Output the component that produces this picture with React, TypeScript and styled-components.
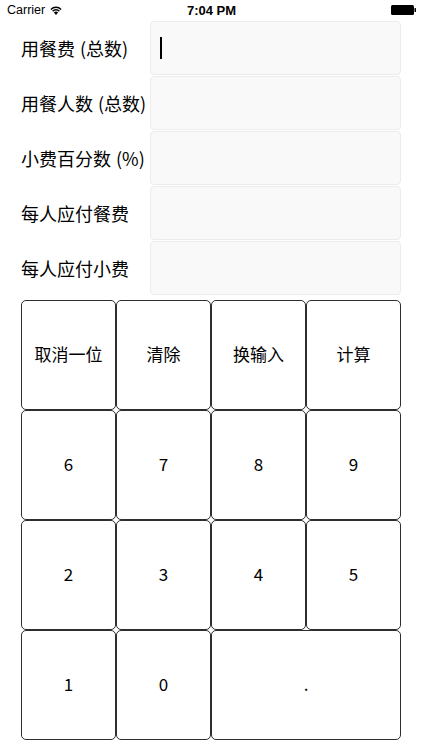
import React from 'react';
import styled, { createGlobalStyle } from 'styled-components';

const Global = createGlobalStyle`
    html, body {
        margin: 0;
        padding: 0;
        background: #ffffff;
    }
    body {
        font-family: "Noto Sans CJK SC", "Noto Sans", sans-serif;
        color: #000;
    }
`;

const Styles = {
    Screen: styled.div`
        width: 422px;
        height: 750px;
        display: flex;
        flex-direction: column;
        background: #fff;
    `,

    StatusBar: styled.div`
        height: 20px;
        display: grid;
        grid-template-columns: 1fr auto 1fr;
        align-items: center;
        padding: 0 6px 0 7px;
        font-family: "Liberation Sans", "Noto Sans", sans-serif;
        font-size: 12.5px;
    `,

    Carrier: styled.div`
        display: flex;
        align-items: center;
        gap: 5px;
    `,

    Time: styled.div`
        font-weight: bold;
        font-size: 13px;
    `,

    Battery: styled.div`
        justify-self: end;
        display: flex;
        align-items: center;
    `,

    Form: styled.div`
        display: flex;
        flex-direction: column;
        gap: 1px;
        padding: 1px 21px 0 21px;
    `,

    Row: styled.div`
        display: flex;
        align-items: center;
        height: 54px;
    `,

    Label: styled.div`
        width: 129px;
        font-size: 18px;
        white-space: nowrap;
        word-spacing: 1px;
    `,

    Field: styled.div`
        flex: 1;
        height: 100%;
        box-sizing: border-box;
        background: #f9f9f9;
        border: 1px solid #ececec;
        border-radius: 4px;
        display: flex;
        align-items: center;
        padding-left: 9px;
    `,

    Caret: styled.div`
        width: 2px;
        height: 22px;
        background: #000;
    `,

    Pad: styled.div`
        margin: 5px 21px 0 21px;
        display: grid;
        grid-template-columns: repeat(4, 95px);
        grid-auto-rows: 110px;
    `,

    Key: styled.button<{ $span?: number }>`
        grid-column: span ${p => p.$span ?? 1};
        background: #fff;
        border: 1px solid #2e2e2e;
        border-radius: 5px;
        font-family: "Noto Sans CJK SC", "Noto Sans", sans-serif;
        font-size: 17px;
        color: #000;
        padding: 0 0 4px 0;
        margin: 0;
    `,
};

const Wifi: React.FC = () => (
    <svg width="12" height="9" viewBox="0 0 12 9">
        <path d="M6 9 L3.9 6.6 A3 3 0 0 1 8.1 6.6 Z" fill="#000" />
        <path d="M2.6 5.2 A4.8 4.8 0 0 1 9.4 5.2" stroke="#000" strokeWidth="1.4" fill="none" />
        <path d="M0.9 3.4 A7.2 7.2 0 0 1 11.1 3.4" stroke="#000" strokeWidth="1.4" fill="none" />
    </svg>
);

const BatteryIcon: React.FC = () => (
    <svg width="25" height="10" viewBox="0 0 25 10">
        <rect x="0" y="0" width="23" height="10" rx="1.5" fill="#000" />
        <rect x="23.5" y="3" width="1.5" height="4" rx="0.5" fill="#000" />
    </svg>
);

const fields = [
    '用餐费 (总数)',
    '用餐人数 (总数)',
    '小费百分数 (%)',
    '每人应付餐费',
    '每人应付小费',
];

const keys: { label: string; span?: number }[] = [
    { label: '取消一位' }, { label: '清除' }, { label: '换输入' }, { label: '计算' },
    { label: '6' }, { label: '7' }, { label: '8' }, { label: '9' },
    { label: '2' }, { label: '3' }, { label: '4' }, { label: '5' },
    { label: '1' }, { label: '0' }, { label: '.', span: 2 },
];

export default function App() {
    return (
        <>
            <Global />
            <Styles.Screen>
                <Styles.StatusBar>
                    <Styles.Carrier>
                        Carrier <Wifi />
                    </Styles.Carrier>
                    <Styles.Time>7:04 PM</Styles.Time>
                    <Styles.Battery>
                        <BatteryIcon />
                    </Styles.Battery>
                </Styles.StatusBar>

                <Styles.Form>
                    {fields.map((f, i) => (
                        <Styles.Row key={f}>
                            <Styles.Label>{f}</Styles.Label>
                            <Styles.Field>
                                {i === 0 && <Styles.Caret />}
                            </Styles.Field>
                        </Styles.Row>
                    ))}
                </Styles.Form>

                <Styles.Pad>
                    {keys.map(k => (
                        <Styles.Key key={k.label} $span={k.span}>
                            {k.label}
                        </Styles.Key>
                    ))}
                </Styles.Pad>
            </Styles.Screen>
        </>
    );
}
